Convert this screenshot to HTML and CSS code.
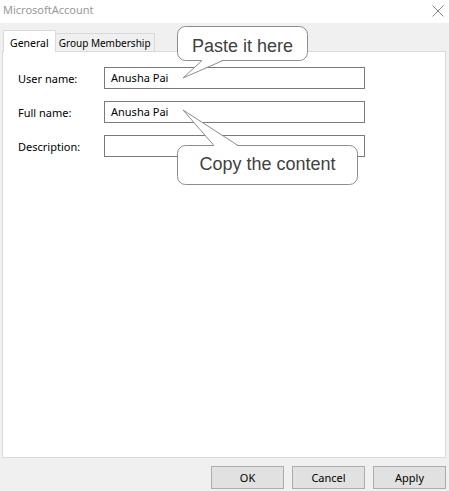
FILE: index.html
```html
<!DOCTYPE html>
<html lang="en">
<head>
  <meta charset="UTF-8">
  <title>MicrosoftAccount</title>
  <link rel="stylesheet" href="styles.css">
</head>
<body>
  <div class="window">
    <div class="titlebar">
      <span class="title">MicrosoftAccount</span>
      <svg class="close" width="12" height="12" viewBox="0 0 12 12">
        <path d="M0.5 0.5 L11.5 11.5 M11.5 0.5 L0.5 11.5" stroke="#8a8a8a" stroke-width="1"/>
      </svg>
    </div>

    <div class="dialog">
      <div class="tabs">
        <div class="tab active">General</div>
        <div class="tab">Group Membership</div>
      </div>

      <div class="panel">
        <div class="row">
          <span class="label">User name:</span>
          <div class="field">Anusha Pai</div>
        </div>
        <div class="row">
          <span class="label">Full name:</span>
          <div class="field">Anusha Pai</div>
        </div>
        <div class="row">
          <span class="label">Description:</span>
          <div class="field"></div>
        </div>
      </div>

      <div class="buttons">
        <button class="btn">OK</button>
        <button class="btn">Cancel</button>
        <button class="btn">Apply</button>
      </div>
    </div>

    <!-- annotation callouts drawn over the dialog -->
    <svg class="callouts" width="449" height="491" viewBox="0 0 449 491">
      <rect x="177.5" y="26.5" width="130" height="34" rx="8" fill="#fff" stroke="#8c8c8c"/>
      <polygon points="202,60 183,78 223,60" fill="#fff"/>
      <polyline points="202,60.5 183,78 223,60.5" fill="none" stroke="#8c8c8c"/>
      <text x="242.5" y="52" class="callout-text">Paste it here</text>

      <rect x="177.5" y="145.5" width="180" height="39" rx="8" fill="#fff" stroke="#8c8c8c"/>
      <polygon points="214,146 183,110 238,146" fill="#fff"/>
      <polyline points="214,145.5 183,110 238,145.5" fill="none" stroke="#8c8c8c"/>
      <text x="267.5" y="170" class="callout-text">Copy the content</text>
    </svg>
  </div>
</body>
</html>
```

FILE: styles.css
```css
body {
  margin: 0;
  font-family: 'Noto Sans', 'Open Sans', sans-serif;
  font-size: 11px;
  color: #000;
}
.window {
  position: relative;
  width: 449px;
  height: 491px;
  background-color: #f0f0f0;
  display: flex;
  flex-direction: column;
  overflow: hidden;
}
.titlebar {
  height: 23px;
  flex-shrink: 0;
  background-color: #fff;
  display: flex;
  align-items: center;
  justify-content: space-between;
  padding: 0 5px 4px 3px;
  box-sizing: border-box;
}
.title {
  color: #999;
  font-size: 11px;
}
.close {
  margin-top: 2px;
}
.dialog {
  display: flex;
  flex-direction: column;
  padding: 7px 3px 0 2px;
}
.tabs {
  display: flex;
  align-items: flex-end;
  height: 21px;
  padding-left: 1px;
  position: relative;
  z-index: 1;
}
.tab {
  height: 17px;
  padding: 0 3px;
  border: 1px solid #d9d9d9;
  border-bottom: none;
  border-left: none;
  background-color: #f0f0f0;
  font-size: 10px;
  line-height: 18px;
}
.tab.active {
  height: 21px;
  padding: 0 6px;
  border-left: 1px solid #d9d9d9;
  background-color: #fff;
  font-size: 10.5px;
  line-height: 24px;
  margin-bottom: -1px;
}
.panel {
  height: 407px;
  box-sizing: border-box;
  background-color: #fff;
  border: 1px solid #d9d9d9;
  padding: 15px 0 0 15px;
  display: flex;
  flex-direction: column;
  gap: 12px;
}
.row {
  display: flex;
  align-items: center;
  height: 22px;
}
.label {
  width: 86px;
}
.field {
  width: 253px;
  height: 20px;
  border: 1px solid #7a7a7a;
  padding-left: 6px;
  line-height: 19px;
}
.buttons {
  display: flex;
  justify-content: flex-end;
  gap: 8px;
  margin-top: 8px;
}
.btn {
  width: 73px;
  height: 23px;
  background-color: #e1e1e1;
  border: 1px solid #adadad;
  font-family: 'Noto Sans', 'Open Sans', sans-serif;
  font-size: 11px;
  color: #000;
  padding: 0;
}
.callouts {
  position: absolute;
  top: 0;
  left: 0;
  pointer-events: none;
}
.callout-text {
  font-family: 'Liberation Sans', Arial, sans-serif;
  font-size: 18px;
  fill: #3f3f3f;
  text-anchor: middle;
}
```
